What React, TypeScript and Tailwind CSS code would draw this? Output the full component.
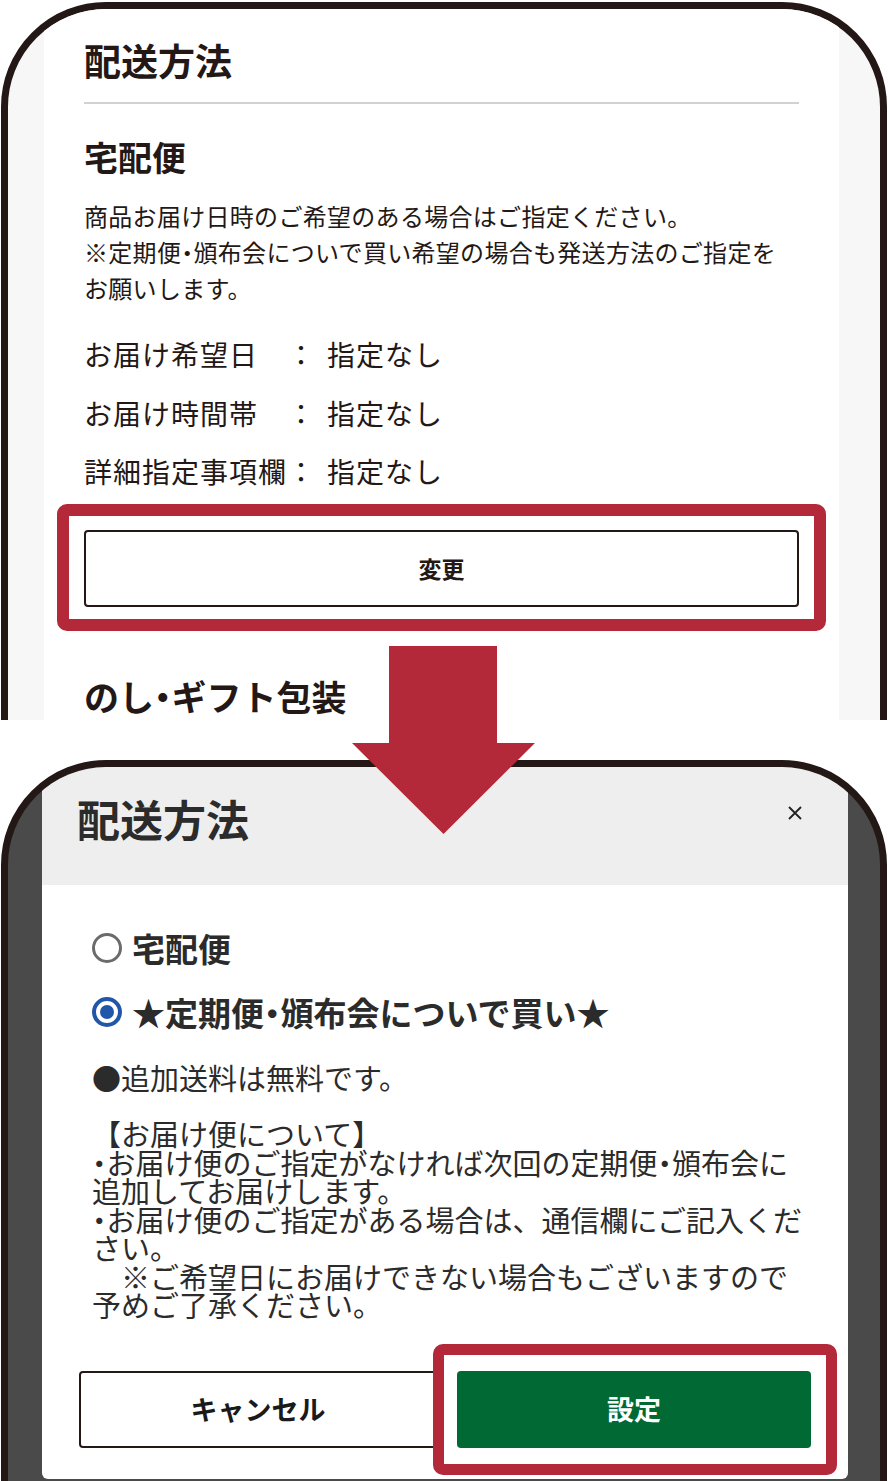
function Dot() {
  return <span className="-mx-[0.25em]">・</span>;
}

export default function App() {
  return (
    <div className="relative w-[888px] h-[1481px] overflow-hidden bg-white font-['Noto_Sans_CJK_JP','Noto_Sans',sans-serif] text-[#231815]">
      {/* Top phone (cut) */}
      <div className="h-[720px] overflow-hidden pt-[2px] px-[1px]">
        <div className="h-[900px] rounded-[105px] border-[7px] border-[#231815] bg-[#f7f7f7] overflow-hidden">
          <div className="ml-[36px] w-[795px] h-full bg-white px-[40px] pt-[29px]">
            <h1 className="text-[37px] leading-[44px] font-bold">配送方法</h1>
            <div className="mt-[20px] h-[2px] bg-[#d2d2d2]" />
            <h2 className="mt-[33px] text-[34px] leading-[40px] font-bold">宅配便</h2>
            <p className="mt-[21px] text-[24px] tracking-[0.3px] leading-[36px] whitespace-nowrap">
              商品お届け日時のご希望のある場合はご指定ください。
              <br />
              ※定期便<Dot />頒布会についで買い希望の場合も発送方法のご指定を
              <br />
              お願いします。
            </p>
            <div className="mt-[19px] text-[28px] tracking-[1px]">
              {[
                ["お届け希望日", "指定なし"],
                ["お届け時間帯", "指定なし"],
                ["詳細指定事項欄", "指定なし"],
              ].map(([k, v]) => (
                <div key={k} className="flex h-[58.5px] items-center whitespace-nowrap">
                  <span className="w-[203px]">{k}</span>
                  <span className="w-[40px]">：</span>
                  <span>{v}</span>
                </div>
              ))}
            </div>
            <div className="relative mt-[29px]">
              <button className="w-full h-[77px] rounded-[4px] border-2 border-[#231815] bg-white text-[23px] font-bold">
                変更
              </button>
              <div className="pointer-events-none absolute -left-[27px] -right-[27px] -top-[26px] -bottom-[24px] rounded-[10px] border-[12px] border-[#b4293a]" />
            </div>
            <h2 className="mt-[67px] text-[35px] leading-[44px] font-bold whitespace-nowrap">
              のし<Dot />ギフト包装
            </h2>
          </div>
        </div>
      </div>

      {/* Bottom phone */}
      <div className="mt-[40px] px-[1px]">
        <div className="h-[900px] rounded-[105px] border-[7px] border-[#231815] bg-[#4a4a4a] overflow-hidden">
          <div className="ml-[34px] w-[806px] text-[#2b2b2b]">
            <div className="h-[118px] bg-[#eeeeee] flex justify-between pl-[35px] pr-[45px] pt-[25px]">
              <h1 className="text-[43px] leading-[52px] font-bold">配送方法</h1>
              <svg width="16" height="16" viewBox="0 0 16 16" className="mt-[13px]">
                <path d="M2 2 L14 14 M14 2 L2 14" stroke="#222" strokeWidth="1.8" fill="none" />
              </svg>
            </div>
            <div className="bg-white rounded-b-[6px] pt-[43px] pb-[31px]">
              <div className="px-[50px]">
                <div className="flex items-center h-[40px] gap-[10px]">
                  <span className="w-[30px] h-[30px] rounded-full border-[3px] border-[#6b6b6b]" />
                  <span className="text-[33px] font-bold leading-[40px]">宅配便</span>
                </div>
                <div className="mt-[24px] flex items-center h-[40px] gap-[10px]">
                  <span className="w-[30px] h-[30px] rounded-full border-[4px] border-[#2256a8] flex items-center justify-center">
                    <span className="w-[14px] h-[14px] rounded-full bg-[#2256a8]" />
                  </span>
                  <span className="text-[33px] font-bold leading-[40px] whitespace-nowrap">
                    ★定期便<Dot />頒布会についで買い★
                  </span>
                </div>
                <p className="mt-[27px] text-[29px] leading-[36px] whitespace-nowrap">●追加送料は無料です。</p>
                <p className="mt-[24px] text-[29px] leading-[28.5px] whitespace-nowrap">
                  【お届け便について】
                  <br />
                  <Dot />お届け便のご指定がなければ次回の定期便<Dot />頒布会に
                  <br />
                  追加してお届けします。
                  <br />
                  <Dot />お届け便のご指定がある場合は、通信欄にご記入くだ
                  <br />
                  さい。
                  <br />
                  {"\u3000※ご希望日にお届けできない場合もございますので"}
                  <br />
                  予めご了承ください。
                </p>
              </div>
              <div className="mt-[52px] px-[37px] flex gap-[20px]">
                <button className="flex-1 h-[77px] rounded-[4px] border-2 border-[#231815] bg-white text-[27px] font-bold text-[#1a1a1a]">
                  キャンセル
                </button>
                <div className="relative flex-1">
                  <button className="w-full h-[77px] rounded-[4px] bg-[#006934] text-[27px] font-bold text-white">
                    設定
                  </button>
                  <div className="pointer-events-none absolute -left-[24px] -right-[26px] -top-[27px] -bottom-[27px] rounded-[10px] border-[11px] border-[#b4293a]" />
                </div>
              </div>
            </div>
          </div>
        </div>
      </div>

      {/* Arrow */}
      <svg className="absolute left-[352px] top-[646px]" width="183" height="188" viewBox="0 0 183 188">
        <polygon points="37,0 145,0 145,97 183,97 91.5,188 0,97 37,97" fill="#b4293a" />
      </svg>
    </div>
  );
}
